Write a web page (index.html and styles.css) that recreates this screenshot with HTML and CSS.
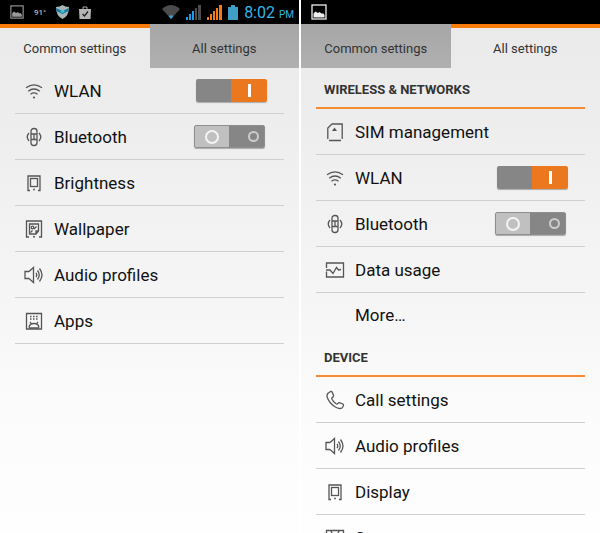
FILE: index.html
```html
<!DOCTYPE html>
<html lang="en">
  <head>
    <meta charset="UTF-8" />
    <title>Settings</title>
    <link rel="stylesheet" href="styles.css">
  </head>
  <body>
    <svg class="sprite" aria-hidden="true">
      <symbol id="i-wlan" viewBox="0 0 20 20">
        <path d="M2 6.8Q10 1 18 6.8M4.2 10.2Q10 5.8 15.8 10.2M6.5 13.2Q10 10.6 13.5 13.2" />
        <circle class="fill" cx="10" cy="16.5" r="1.1" />
      </symbol>
      <symbol id="i-bluetooth" viewBox="0 0 20 20">
        <rect x="7" y="1.5" width="6" height="17" rx="2.8" />
        <path d="M7 7h6M7 12.5h6M10 7v5.5M5 6Q1.5 10 5 14M15 6Q18.5 10 15 14" />
      </symbol>
      <symbol id="i-display" viewBox="0 0 20 20">
        <path d="M6 17.5H4V3H16V17.5H14" />
        <rect x="6.5" y="5.5" width="7" height="8" />
        <circle class="fill" cx="10" cy="16.5" r=".9" />
      </symbol>
      <symbol id="i-wallpaper" viewBox="0 0 20 20">
        <path d="M5 18H2.5V2H17.5V18H15" />
        <path d="M5.500 5H14.500V12L12 15H5.500ZM12 15V12H14.500" />
        <circle cx="8.500" cy="8.500" r="1.300" />
        <path d="M6.500 13.500L8.500 11.500M10 10L12.500 7.500" />
        <circle class="fill" cx="10" cy="17.800" r="1" />
      </symbol>
      <symbol id="i-audio" viewBox="0 0 20 20">
        <path d="M5 6.500H1V13.500H5M5 6.500L9.500 2.500V17.500L5 13.500M12 8Q13.500 10 12 12M13.500 5.500Q17 10 13.500 14.500M15.500 3.500Q20.500 10 15.500 16.500" />
      </symbol>
      <symbol id="i-apps" viewBox="0 0 20 20">
        <path d="M2.500 2.500H17.500V18H2.500Z" />
        <path stroke-dasharray="1.500 1.500" d="M6 5.500H15M6 8H15" />
        <path d="M5 16.500Q5.500 12.500 10 12.500T15 16.500M6 10.800L7.500 13M14 10.800L12.500 13M5 17H15" />
      </symbol>
      <symbol id="i-sim" viewBox="0 0 20 20">
        <path d="M2.800 17V6L7 2H17.200V17M4 18.500H16" />
        <path class="fill" d="M9.500 5.500L12 9H7Z" />
      </symbol>
      <symbol id="i-data" viewBox="0 0 20 20">
        <path d="M1.500 8V3H18.500V17H1.500V11.500M1 10H5L8 13.500L11.500 7.500L13.500 10L16 9.500" />
      </symbol>
      <symbol id="i-call" viewBox="0 0 20 20">
        <path d="M3 3.200L5.500 1.500Q6.800 1.200 7.300 2.500L8.500 5.500Q8.700 6.700 7.500 7.300Q6.300 8 7 9.300Q8.500 12 11 13.800Q12.300 14.500 12.900 13.400Q13.800 12.400 15 12.800L17.800 14Q18.800 14.800 18.300 16L17 18Q14 19.500 9.500 16.500Q4 12.500 2.300 7.500Q1.500 4.800 3 3.200Z" />
      </symbol>
      <symbol id="i-storage" viewBox="0 0 20 20">
        <path d="M1.500 2.500H18.500V17.500H1.500ZM6 3L7.500 6M14 3L12.500 6M4 13.500H16" />
      </symbol>
      <symbol id="i-picture" viewBox="0 0 16 16">
        <rect x="1" y="1" width="14" height="14" fill="none" stroke="currentColor" stroke-width="1.300" />
        <path fill="currentColor" d="M2.500 13.500V9.500L4.500 7.500L7 9L8.500 8L10.500 9.500H12.500L13.500 11V13.500Z" />
      </symbol>
      <symbol id="i-signal" viewBox="0 0 15 15">
        <path d="M0 12h2v3H0zM3 9h2v6H3zM6 6h2v9H6z" />
        <path class="weak" d="M9 3h2v12H9zM12 0h3v15h-3z" />
      </symbol>
    </svg>

    <section class="screen">
      <header class="status-bar">
        <div class="notifications">
          <svg class="picture"><use href="#i-picture" /></svg>
          <span class="temp">91°</span>
          <svg class="shield" viewBox="0 0 13 14">
            <path fill="#a9b5b8" d="M0 2Q4 2 6.500 0Q9 2 13 2Q13 11 6.500 14Q0 11 0 2Z" />
            <path fill="#14799c" d="M0 3L6.500 6L13 3L12.500 6L6.500 9L.5 6Z" />
            <path fill="#45c5d4" d="M4 6.500L6.500 8L9 6.500L6.500 5Z" />
          </svg>
          <svg class="bag" viewBox="0 0 12 13">
            <path fill="none" stroke="#aaa" d="M4 3V1H8V3" />
            <path fill="#b5b5b5" d="M0 3H12L11.500 13H.5Z" />
            <path fill="none" stroke="#222" stroke-width="1.400" d="M3.500 8L5.500 10L9 5.500" />
          </svg>
        </div>
        <div class="system">
          <svg class="wifi" viewBox="0 0 18 14">
            <path fill="#4b4b4b" d="M0 4Q9 -4 18 4L9 14Z" />
            <path fill="#33a5d5" d="M6.500 11Q9 9.500 11.500 11L9 14Z" />
          </svg>
          <svg class="signal signal-blue"><use href="#i-signal" /></svg>
          <svg class="signal signal-orange"><use href="#i-signal" /></svg>
          <svg class="battery" viewBox="0 0 10 15">
            <path fill="#3f9fc6" d="M0 2H3V0H7V2H10V15H0Z" />
          </svg>
          <span class="clock">8:02 <small>PM</small></span>
        </div>
      </header>

      <nav class="tabs" role="tablist">
        <button class="tab active" role="tab" aria-selected="true">Common settings</button>
        <button class="tab" role="tab" aria-selected="false">All settings</button>
      </nav>

      <ul class="list">
        <li class="row">
          <svg class="icon"><use href="#i-wlan" /></svg>
          <label for="wlan-1">WLAN</label>
          <input type="checkbox" class="toggle" id="wlan-1" checked />
        </li>
        <li class="row">
          <svg class="icon"><use href="#i-bluetooth" /></svg>
          <label for="bt-1">Bluetooth</label>
          <input type="checkbox" class="toggle" id="bt-1" />
        </li>
        <li class="row">
          <svg class="icon"><use href="#i-display" /></svg>
          <a href="#">Brightness</a>
        </li>
        <li class="row">
          <svg class="icon"><use href="#i-wallpaper" /></svg>
          <a href="#">Wallpaper</a>
        </li>
        <li class="row">
          <svg class="icon"><use href="#i-audio" /></svg>
          <a href="#">Audio profiles</a>
        </li>
        <li class="row">
          <svg class="icon"><use href="#i-apps" /></svg>
          <a href="#">Apps</a>
        </li>
      </ul>
    </section>

    <section class="screen">
      <header class="status-bar">
        <div class="notifications">
          <svg class="picture bright"><use href="#i-picture" /></svg>
        </div>
      </header>

      <nav class="tabs" role="tablist">
        <button class="tab" role="tab" aria-selected="false">Common settings</button>
        <button class="tab active" role="tab" aria-selected="true">All settings</button>
      </nav>

      <h2>WIRELESS &amp; NETWORKS</h2>
      <ul class="list">
        <li class="row">
          <svg class="icon"><use href="#i-sim" /></svg>
          <a href="#">SIM management</a>
        </li>
        <li class="row">
          <svg class="icon"><use href="#i-wlan" /></svg>
          <label for="wlan-2">WLAN</label>
          <input type="checkbox" class="toggle" id="wlan-2" checked />
        </li>
        <li class="row">
          <svg class="icon"><use href="#i-bluetooth" /></svg>
          <label for="bt-2">Bluetooth</label>
          <input type="checkbox" class="toggle" id="bt-2" />
        </li>
        <li class="row">
          <svg class="icon"><use href="#i-data" /></svg>
          <a href="#">Data usage</a>
        </li>
        <li class="row more">
          <a href="#">More…</a>
        </li>
      </ul>

      <h2>DEVICE</h2>
      <ul class="list">
        <li class="row">
          <svg class="icon"><use href="#i-call" /></svg>
          <a href="#">Call settings</a>
        </li>
        <li class="row">
          <svg class="icon"><use href="#i-audio" /></svg>
          <a href="#">Audio profiles</a>
        </li>
        <li class="row">
          <svg class="icon"><use href="#i-display" /></svg>
          <a href="#">Display</a>
        </li>
        <li class="row">
          <svg class="icon"><use href="#i-storage" /></svg>
          <a href="#">Storage</a>
        </li>
      </ul>
    </section>
  </body>
</html>
```
FILE: styles.css
```css
*,
*::before,
*::after {
  box-sizing: border-box;
}
body {
  margin: 0;
  height: 100vh;
  overflow: hidden;
  display: grid;
  grid-template-columns: 1fr 1fr;
  gap: 2px;
  background: #fff;
  font-family: Roboto, sans-serif;
  color: #111;
}
.sprite {
  display: none;
}
.screen {
  height: 100vh;
  overflow: hidden;
  background: linear-gradient(#e9e9e9, #ededed 20%, #f4f4f4 50%, #fcfcfc 80%, #fefefe);
}

/* status bar */
.status-bar {
  display: flex;
  justify-content: space-between;
  align-items: center;
  height: 24px;
  padding: 0 5px 0 10px;
  background: #000;
}
.notifications {
  display: flex;
  align-items: center;
  gap: 10px;
}
.system {
  display: flex;
  align-items: center;
  gap: 6px;
}
.picture {
  width: 14px;
  height: 14px;
  color: #999;
}
.picture.bright {
  width: 16px;
  height: 16px;
  color: #eee;
}
.temp {
  font-size: 8px;
  font-weight: 500;
  color: #bbb;
}
.shield {
  width: 13px;
  height: 14px;
}
.bag {
  width: 12px;
  height: 13px;
}
.wifi {
  width: 18px;
  height: 14px;
}
.signal {
  width: 15px;
  height: 15px;
}
.signal-blue {
  fill: #1c9be8;
  --weak: #4b4b4b;
}
.signal-orange {
  fill: #f47a1c;
  --weak: #f47a1c;
}
.weak {
  fill: var(--weak);
}
.battery {
  width: 10px;
  height: 15px;
}
.clock {
  font-size: 16px;
  color: #33b5e5;
}
.clock small {
  font-size: 10px;
}

/* tabs */
.tabs {
  display: grid;
  grid-template-columns: 1fr 1fr;
  height: 44px;
}
.tab {
  border: none;
  padding: 4px 0 0;
  background: linear-gradient(#a6a6a6, #b0b0b0);
  font-family: inherit;
  font-size: 13px;
  color: #333;
  cursor: pointer;
}
.tab.active {
  border-top: 4px solid #f97c0a;
  padding: 0;
  background: none;
}

/* lists */
h2 {
  margin: 0 15px;
  padding: 0 8px;
  height: 41px;
  line-height: 43px;
  border-bottom: 2px solid #f68b34;
  font-size: 13px;
  font-weight: 700;
  color: #333;
}
.list {
  list-style: none;
  margin: 0 15px;
  padding: 0;
}
.row {
  display: flex;
  align-items: center;
  height: 46px;
  padding: 0 17px 0 9px;
  border-bottom: 1px solid #cfcfcf;
  font-size: 17px;
}
.row a,
.row label {
  flex: 1;
  color: inherit;
  text-decoration: none;
}
.row.more {
  height: 43px;
  padding-left: 39px;
  border-bottom: none;
}
.icon {
  width: 20px;
  height: 20px;
  margin-right: 10px;
  fill: none;
  stroke: #555;
  stroke-width: 1.3;
}
.fill {
  fill: #555;
  stroke: none;
}

/* on / off switch */
.toggle {
  appearance: none;
  display: grid;
  grid-template-columns: 1fr 1fr;
  place-items: center;
  width: 71px;
  height: 23px;
  margin: 0 2px 0 0;
  border: 1px solid #8e8e8e;
  border-radius: 2px;
  background: linear-gradient(90deg, #c0c0c0 34px, #868686 34px);
  box-shadow: 0 1px 1px #aaa;
  cursor: pointer;
}
.toggle::before,
.toggle::after {
  content: "";
  border: 2px solid #f4f4f4;
  border-radius: 50%;
  width: 14px;
  height: 14px;
}
.toggle::after {
  width: 11px;
  height: 11px;
  margin-left: 14px;
  border-color: #ccc;
}
.toggle:checked {
  margin-right: 0;
  border: none;
  background: linear-gradient(90deg, #868686 35px, #eb781e 35px);
}
.toggle:checked::before {
  visibility: hidden;
}
.toggle:checked::after {
  width: 3px;
  height: 13px;
  margin: 0;
  border: none;
  border-radius: 0;
  background: #fff;
}
```
